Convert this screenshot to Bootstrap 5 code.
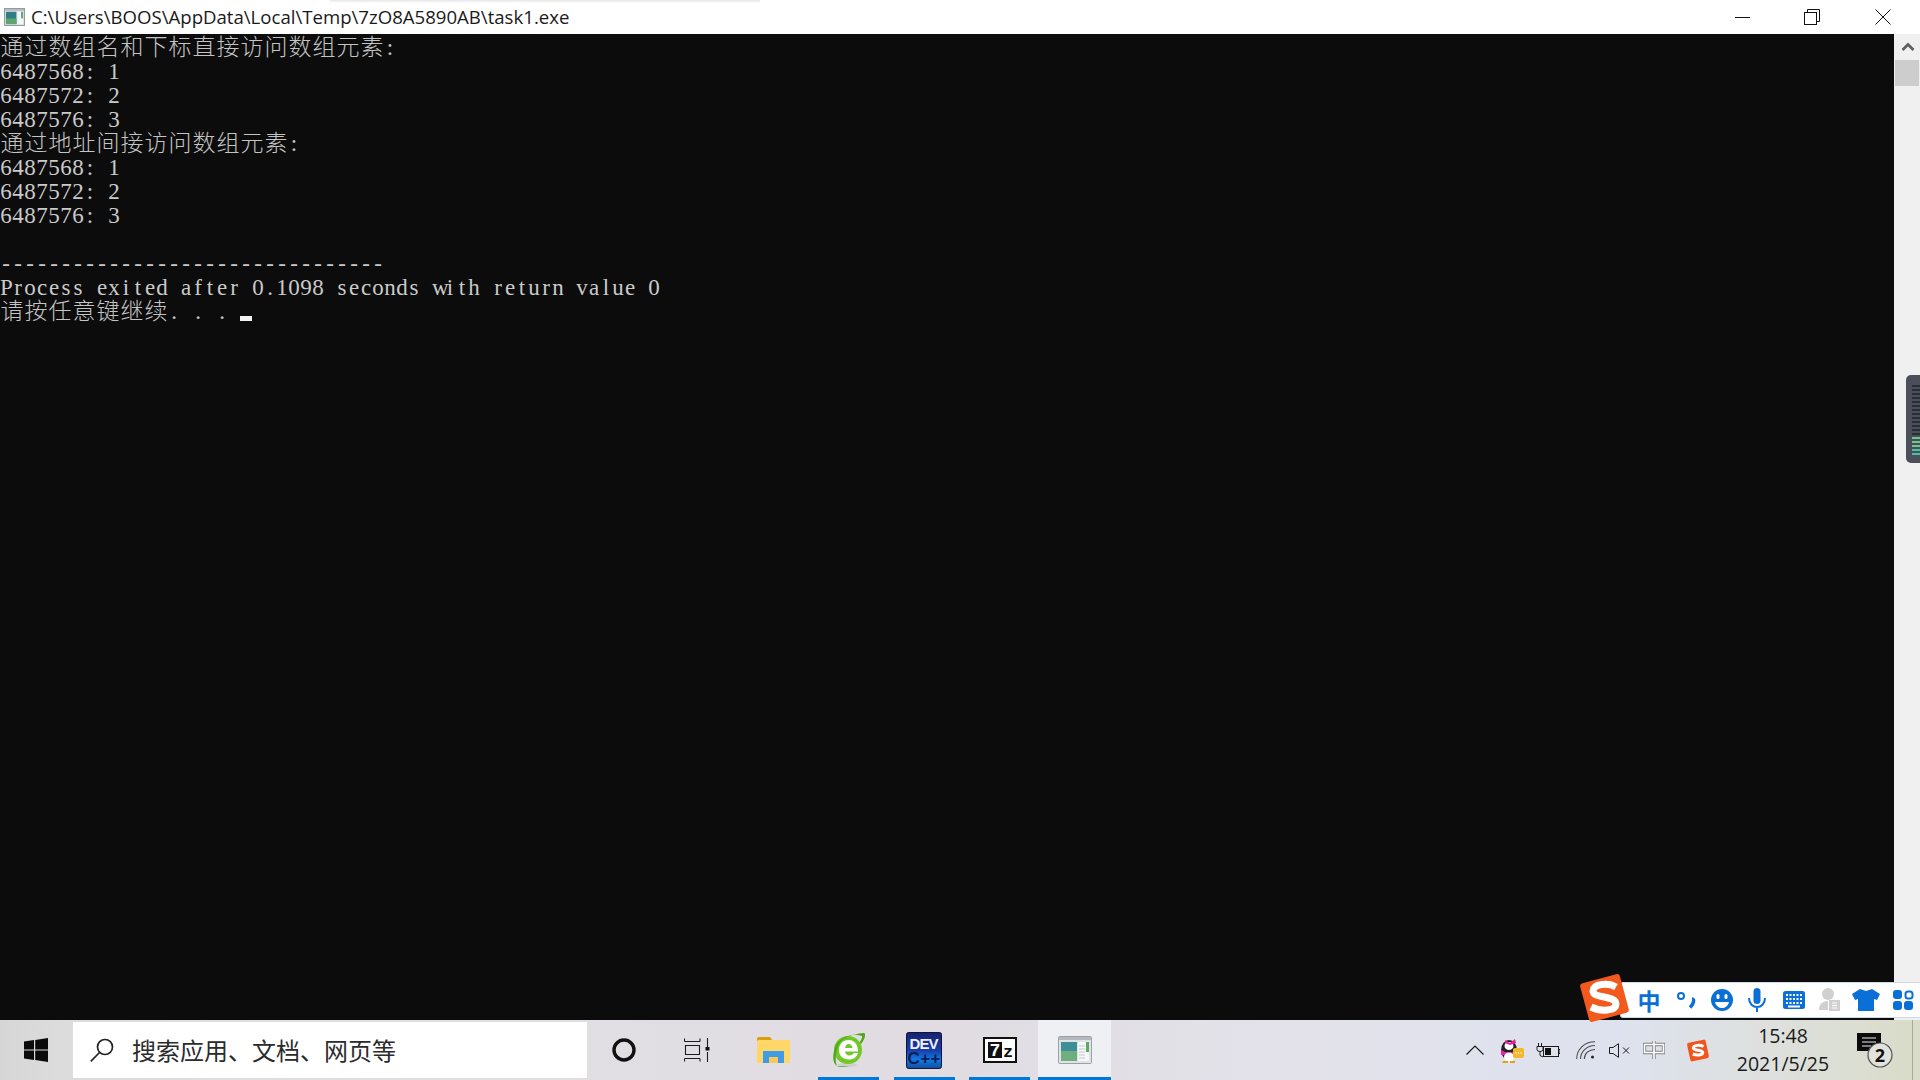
<!doctype html>
<html lang="zh-CN">
<head>
<meta charset="utf-8">
<title>task1.exe</title>
<link href="https://cdn.jsdelivr.net/npm/bootstrap@5.3.0/dist/css/bootstrap.min.css" rel="stylesheet">
<style>
html,body{height:100%;overflow:hidden}
body{background:#0c0c0c;font-family:"Open Sans","Noto Sans CJK SC",sans-serif}
.desk{width:1920px;height:1080px;position:relative}
.titlebar{height:34px;background:#fff;color:#1a1a1a;font-size:18.6px;line-height:34px;position:relative}
.titlebar .ttl{margin-left:6px;white-space:nowrap}
.topshade{position:absolute;left:330px;top:0;width:430px;height:3px;background:linear-gradient(#e6e6e6,#fff)}
.winbtns{margin-left:auto;padding-right:29px}
.winbtns svg{display:block;flex:none}
.winbtns .wb2{margin-left:54px}
.winbtns .wb3{margin-left:55px}
.midrow{height:986px}
.console{width:1894px;background:#0c0c0c;color:#cacaca;padding-top:2px;font-family:"Liberation Serif","Noto Sans CJK SC",serif}
.cline{height:24px;line-height:24px;white-space:pre;font-size:23px;display:block}
.cline .ch{display:inline-block;width:12px;text-align:center;vertical-align:top;white-space:pre}
.cline .hz{display:inline-block;width:24px;height:24px;text-align:center;vertical-align:top;font:300 23px/18px "Noto Sans CJK SC",sans-serif;color:#c4c4c4}
.caret{display:inline-block;width:12px;height:5px;background:#f2f2f2;vertical-align:-2px}
.sbar{width:26px;background:#f0f0f0;padding-left:1px}
.sbar .arrow{height:26px}
.sbar .thumb{width:24px;height:26px;background:#cdcdcd}
.taskbar{height:60px;background:linear-gradient(90deg,#d6d6d6 0,#dcdcdc 60px,#e2dfe4 500px,#e0dce2 950px,#e3e2ea 1300px,#dde2ee 1620px,#dde0dc 1780px,#d9dcc8 1920px);color:#111}
.startcell{width:73px}
.searchbox{width:514px;height:56px;margin-top:2px;background:#fff;padding-left:17px;gap:18px;font:24px/1 "Noto Sans CJK SC",sans-serif;color:#2b2b2b}
.tcell{height:60px;flex:none;position:relative}
.tcell.w-cort{width:97px;padding-left:25px}
.tcell.w-view{width:73px}
.tcell.w-exp{width:61px}
.tcell.run{width:61px;margin-right:14.500px}
.tcell.run::after,.tcell.active::after{content:"";position:absolute;left:0;right:0;bottom:0;height:3px;background:#0078d7}
.tcell.w-seven{margin-right:8px}
.tcell.active{width:73px;background:#eff0f4}
.tray{margin-left:auto;padding-right:7px;height:60px}
.tray .tslot{flex:none}
.gap-bat{margin-left:12px}.gap-wifi{margin-left:16px}.gap-spk{margin-left:14px}.gap-ime{margin-left:13px}.gap-sg{margin-left:21px}.gap-clock{margin-left:10px}.gap-note{margin-left:11px}
.clock{width:126px;font-size:19.500px;line-height:28px;text-align:center;color:#1a1a1a}
.showdesk{width:1px;height:60px;background:#a9a9a0;margin-left:19px}
.imebar{position:absolute;left:1620px;top:982px;width:300px;height:36px;background:#fff;border:1px solid #c9d9ee;border-right:0;border-radius:3px 0 0 3px}
.imebar .imeitem{position:absolute;top:0;height:34px;width:34px;margin-left:-17px}
.imezh{font:700 23px/34px "Noto Sans CJK SC",sans-serif;color:#0a6fd6;text-align:center}
.imelogo{position:absolute;left:1580px;top:973px}
.sidewidget{position:absolute;left:1906px;top:375px;width:14px;height:88px;background:#4c4f5a;border-radius:5px 0 0 5px;padding:10px 0 0 6px}
.sidewidget i{display:block;height:2px;width:8px;margin-bottom:2px;background:#2c2e36}
.sidewidget i.g{background:#6cc98c}
.sidewidget i.gt{background:#45c2a8}
</style>
</head>
<body>
<div class="desk d-flex flex-column">
  <div class="titlebar d-flex align-items-center">
    <svg class="ms-1" width="21" height="18" viewBox="0 0 22 19"><rect x=".5" y=".5" width="21" height="18" fill="#dfe3e6" stroke="#8d9499"/><rect x="1" y="1" width="20" height="2" fill="#b6bcc1"/><rect x="2" y="4" width="11" height="13" fill="#2f7d86"/><rect x="2" y="11" width="11" height="6" fill="#5ea46f"/><rect x="14" y="4" width="6" height="13" fill="#f4f6f7"/><rect x="18" y="4" width="2" height="7" fill="#59a86a"/></svg>
    <span class="ttl">C:\Users\BOOS\AppData\Local\Temp\7zO8A5890AB\task1.exe</span>
    <span class="topshade"></span>
    <div class="winbtns d-flex align-items-center">
      <svg width="15" height="15" viewBox="0 0 15 15"><path d="M0 7.500h15" stroke="#111" fill="none"/></svg>
      <svg class="wb2" width="16" height="16" viewBox="0 0 16 16"><path d="M3.500 3.500V.5h12v12h-3" fill="none" stroke="#111"/><rect x=".5" y="3.500" width="12" height="12" fill="#fff" stroke="#111"/></svg>
      <svg class="wb3" width="16" height="16" viewBox="0 0 16 16"><path d="M.5.5l15 15M15.500.5l-15 15" stroke="#111" fill="none"/></svg>
    </div>
  </div>
  <div class="midrow d-flex">
    <div class="console flex-grow-0">
      <div class="cline">通过数组名和下标直接访问数组元素:</div>
      <div class="cline">6487568: 1</div>
      <div class="cline">6487572: 2</div>
      <div class="cline">6487576: 3</div>
      <div class="cline">通过地址间接访问数组元素:</div>
      <div class="cline">6487568: 1</div>
      <div class="cline">6487572: 2</div>
      <div class="cline">6487576: 3</div>
      <div class="cline"></div>
      <div class="cline">--------------------------------</div>
      <div class="cline">Process exited after 0.1098 seconds with return value 0</div>
      <div class="cline" id="lastline">请按任意键继续. . . </div>
    </div>
    <div class="sbar">
      <div class="arrow d-flex align-items-center justify-content-center"><svg width="14" height="10" viewBox="0 0 14 10"><path d="M1.500 8L7 2.500 12.500 8" fill="none" stroke="#606060" stroke-width="2.800"/></svg></div>
      <div class="thumb"></div>
    </div>
  </div>
  <div class="taskbar d-flex">
    <div class="startcell d-flex align-items-center ps-4">
      <svg width="24" height="24" viewBox="0 0 24 24"><path d="M0 3.500l10-1.400v9.300H0zM11.200 1.900L24 0v11.400H11.200zM0 12.600h10v9.300L0 20.500zM11.200 12.600H24V24l-12.800-1.900z" fill="#0b0b0b"/></svg>
    </div>
    <div class="searchbox d-flex align-items-center">
      <svg width="24" height="24" viewBox="0 0 24 24"><circle cx="15" cy="9" r="7.500" fill="none" stroke="#222" stroke-width="1.700"/><path d="M9.500 14.500L.8 23.300" stroke="#222" stroke-width="1.700"/></svg>
      <span>搜索应用、文档、网页等</span>
    </div>
    <div class="tcell w-cort d-flex align-items-center"><svg width="24" height="24" viewBox="0 0 24 24"><circle cx="12" cy="12" r="10" fill="none" stroke="#111" stroke-width="3.400"/></svg></div>
    <div class="tcell w-view d-flex align-items-center"><svg width="26" height="24" viewBox="0 0 26 24"><path d="M.5 3.500V.5M.5 3.500h15.500M16 3.500V.5M1.500 7.500h14v9h-14zM.5 20.500h15.500M.5 20.500v3M16 20.500v3M23.500 0v9M23.500 14v10" fill="none" stroke="#1c1c1c" stroke-width="1.100"/><rect x="21.500" y="9" width="4" height="3.500" fill="#111"/></svg></div>
    <div class="tcell w-exp d-flex align-items-center"><svg width="33" height="26" viewBox="0 0 33 26"><path d="M0 2q0-2 2-2h11l3 4H0z" fill="#dc9e10"/><rect y="3" width="33" height="23" rx="1.500" fill="#ffd768"/><path d="M6 26V14h21v12h-6v-6h-9v6z" fill="#3f9be6"/><rect x="12" y="20" width="9" height="6" fill="#f6c95a"/></svg></div>
    <div class="tcell run d-flex align-items-center justify-content-center"><svg width="34" height="36" viewBox="0 0 34 36"><ellipse cx="15" cy="33" rx="10" ry="2" fill="#cfcfcf"/><circle cx="16" cy="18" r="14" fill="#72c828"/><path d="M7 18c0-6 4-10 9.500-10S26 12 26 19.500H13c.5 2.500 2 4 4.500 4 2 0 3.500-1 4.300-2.500H26c-1.500 4.500-4.700 6.500-8.800 6.500C11 27.500 7 24 7 18zm6-2h7.500c-.4-2.500-2-4-3.800-4S13.500 13.500 13 16z" fill="#fff"/><path d="M5 34C0 31 .5 22 3.500 14 7 7 15 3 26 2c-9 1-17 5-20 12-2.500 7-3 15-1 20z" fill="#4fa81c"/><path d="M22 3c5-2 11-3 11-1 .5 3-1.500 7-4 10l-1.500-1.500c1.500-2 3-5 2.500-6.500-1-.5-4-1-8-1z" fill="#4fa81c"/><path d="M5 34c3 1 8 1.500 12 .5-5 0-9-.5-12-.5z" fill="#4fa81c"/></svg></div>
    <div class="tcell run d-flex align-items-center justify-content-center"><svg width="36" height="37" viewBox="0 0 36 37"><defs><linearGradient id="dv" x1="0" y1="0" x2="0" y2="1"><stop offset="0" stop-color="#16236e"/><stop offset=".5" stop-color="#1a3ea8"/><stop offset=".75" stop-color="#0f7be6"/><stop offset="1" stop-color="#124d9e"/></linearGradient></defs><rect x=".5" y=".5" width="35" height="36" rx="2" fill="url(#dv)" stroke="#10163a"/><text x="18" y="17" font-family="Liberation Sans" font-weight="700" font-size="15" text-anchor="middle" fill="#eef1fa" textLength="29">DEV</text><text x="18" y="32" font-family="Liberation Sans" font-weight="700" font-size="17" text-anchor="middle" fill="#0b1c55" textLength="33">C++</text></svg></div>
    <div class="tcell run w-seven d-flex align-items-center justify-content-center"><svg width="34" height="26" viewBox="0 0 34 26"><rect x="1" y="1" width="32" height="24" fill="#fff" stroke="#111" stroke-width="2"/><rect x="5" y="5" width="14" height="16" fill="#111"/><text x="12" y="19" font-family="Liberation Mono" font-weight="700" font-size="18" text-anchor="middle" fill="#fff">7</text><text x="25" y="20" font-family="Liberation Mono" font-weight="700" font-size="17" text-anchor="middle" fill="#111">z</text></svg></div>
    <div class="tcell active d-flex align-items-center justify-content-center"><svg width="34" height="28" viewBox="0 0 34 28"><rect x=".5" y=".5" width="33" height="27" rx="1" fill="#dfe3e6" stroke="#9ba1a6"/><rect x="1" y="1" width="32" height="3" fill="#b3b9be"/><rect x="3" y="6" width="16" height="19" fill="#3d8e96"/><rect x="3" y="15" width="16" height="10" fill="#6fae7d"/><rect x="20" y="6" width="11" height="19" fill="#f6f7f8"/><rect x="28" y="6" width="3" height="10" fill="#5aa96a"/><path d="M21 10h6M21 13h6M21 16h6M21 19h6M21 22h6" stroke="#c6cacc"/></svg></div>

    <div class="tray d-flex align-items-center">
      <svg class="tslot" width="18" height="10" viewBox="0 0 18 10"><path d="M.5 9.500L9 1l8.500 8.500" fill="none" stroke="#1a1a1a" stroke-width="1.200"/></svg>
      <svg class="tslot ms-3" width="24" height="25" viewBox="0 0 24 25"><ellipse cx="9" cy="12" rx="8" ry="10" fill="#222"/><ellipse cx="9" cy="8" rx="4.500" ry="4" fill="#fff"/><path d="M1 12q8 5 16 0l1 5H1z" fill="#f020b0"/><path d="M5 2l5 3 5-4 1 4-6 2-5-2z" fill="#ee1f9e"/><ellipse cx="9" cy="19" rx="5" ry="4.500" fill="#fff"/><path d="M3 23h5v2H2zM10 23h5v2h-5z" fill="#e8a010"/><rect x="13" y="10" width="11" height="10" rx="2" fill="#f3b92a"/><path d="M15.500 15h1M18 15h1M20.500 15h1" stroke="#fff" stroke-width="1.500"/></svg>
      <svg class="tslot gap-bat" width="24" height="15" viewBox="0 0 24 15"><rect x="7.500" y="3.500" width="15" height="10" fill="none" stroke="#1c1c1c"/><rect x="9" y="5" width="6" height="7" fill="#111"/><path d="M23 6.500h1v4h-1M2.500 0v3M5.500 0v3M1 3.500h6v3q0 2-3 2t-3-2zM4 8.500v4l3 1.500" fill="none" stroke="#1c1c1c"/></svg>
      <svg class="tslot gap-wifi" width="19" height="18" viewBox="0 0 19 18"><path d="M.7 18C.7 8.500 8 .7 19 .7M4.500 18C4.500 11 10.500 4.500 19 4.500M8.300 18c0-5.500 4.500-9.500 10.700-9.500" fill="none" stroke="#4b4b4b" stroke-width="1.100"/><circle cx="16.500" cy="16" r="1.500" fill="#222"/></svg>
      <svg class="tslot gap-spk" width="21" height="15" viewBox="0 0 21 15"><path d="M.5 4.500h3.500L9.500.7v13.600L4 10.500H.5z" fill="none" stroke="#1c1c1c"/><path d="M14 4.500l6 6M20 4.500l-6 6" stroke="#1c1c1c"/></svg>
      <svg class="tslot gap-ime" width="22" height="20" viewBox="0 0 22 20"><path d="M1.500 4.500h19v8h-19zM11 1v18" fill="none" stroke="#808080" stroke-width="3.400"/><path d="M1.500 4.500h19v8h-19zM11 1v18" fill="none" stroke="#fff" stroke-width="1.600"/></svg>
      <svg class="tslot gap-sg" width="24" height="23" viewBox="0 0 24 23"><rect x="2.500" y="2" width="19" height="19" rx="2" fill="#f0551c" transform="rotate(-12 12 11.500)"/><path d="M17.500 7.500C14 5.500 7.500 6 7.300 9c0 3 9.500 1.500 9.500 4.500 0 3-6.500 3-10 1.500" fill="none" stroke="#fff" stroke-width="3"/></svg>
      <div class="clock tslot gap-clock"><div>15:48</div><div>2021/5/25</div></div>
      <svg class="tslot gap-note" width="36" height="36" viewBox="0 0 36 36"><path d="M0 1h24v18h-8l-4 4v-4H0z" fill="#0b0b0b"/><path d="M5 6h14M5 10h14M5 14h9" stroke="#eee"/><circle cx="23" cy="23" r="12" fill="#e2e2dc" stroke="#555" stroke-width="1.200"/><text x="23" y="29.500" text-anchor="middle" font-family="Open Sans" font-weight="700" font-size="18" fill="#111">2</text></svg>
      <div class="showdesk tslot"></div>
    </div>
  </div>

  <div class="imebar">
    <div class="imeitem imezh" style="left:28px">中</div>
    <svg class="imeitem" style="left:65px" viewBox="0 0 34 34"><circle cx="12" cy="13" r="3" fill="none" stroke="#0a6fd6" stroke-width="2"/><path d="M23 16c1.500 0 2 1 1.500 3-.5 2-2 4-3.500 5.500" fill="none" stroke="#0a6fd6" stroke-width="3.400"/></svg>
    <svg class="imeitem" style="left:101px" viewBox="0 0 34 34"><circle cx="17" cy="17" r="11" fill="#0a6fd6"/><rect x="11.500" y="11" width="3" height="5" rx="1.500" fill="#fff"/><rect x="19.500" y="11" width="3" height="5" rx="1.500" fill="#fff"/><path d="M10 19h14c-1 4-4 6-7 6s-6-2-7-6z" fill="#fff"/></svg>
    <svg class="imeitem" style="left:136px" viewBox="0 0 34 34"><rect x="13.500" y="5" width="7" height="16" rx="3.500" fill="#0a6fd6"/><path d="M9 15c0 6 4 9 8 9s8-3 8-9M17 24v5" fill="none" stroke="#0a6fd6" stroke-width="2"/></svg>
    <svg class="imeitem" style="left:173px" viewBox="0 0 34 34"><rect x="6" y="8" width="22" height="18" rx="2.500" fill="#0a6fd6"/><path d="M9 12h16M9 16h16M9 20h16" stroke="#fff" stroke-width="2" stroke-dasharray="2 1.500"/><path d="M11 23.500h12" stroke="#fff" stroke-width="2"/></svg>
    <svg class="imeitem" style="left:209px" viewBox="0 0 34 34"><circle cx="15" cy="11" r="6" fill="#d0d0d0"/><path d="M6 27c0-6 4-9 9-9v9z" fill="#d0d0d0"/><rect x="16" y="17" width="11" height="11" fill="#d0d0d0"/><path d="M19 20h5M19 22.500h5M19 25h5" stroke="#fff"/></svg>
    <svg class="imeitem" style="left:245px" viewBox="0 0 34 34"><path d="M11 6l6 2 6-2 8 5-3 6-3-1v12H9V16l-3 1-3-6z" fill="#0a6fd6"/></svg>
    <svg class="imeitem" style="left:282px" viewBox="0 0 34 34"><rect x="7" y="7" width="9" height="9" rx="3" fill="#0a6fd6"/><rect x="19.500" y="8.500" width="7" height="7" rx="2.500" fill="none" stroke="#0a6fd6" stroke-width="2"/><rect x="7" y="18" width="9" height="9" rx="3" fill="#0a6fd6"/><rect x="18" y="18" width="9" height="9" rx="3" fill="#0a6fd6"/></svg>
  </div>
  <svg class="imelogo" width="50" height="50" viewBox="0 0 50 50"><rect x="4" y="5" width="41" height="40" rx="3" fill="#f2591c" transform="rotate(-15 24.500 25)"/><path d="M36 14C28 9 13 11 13 18c0 8 23 4 23 13 0 7-15 8-25 3" fill="none" stroke="#fff" stroke-width="7"/></svg>
  <div class="sidewidget"><i></i><i></i><i></i><i></i><i></i><i></i><i></i><i></i><i></i><i></i><i></i><i></i><i></i><i class="g"></i><i class="g"></i><i class="g"></i><i class="gt"></i><i class="gt"></i></div>
</div>
<script>
document.querySelectorAll('.cline').forEach(function(l){
  var t=l.textContent;l.textContent='';
  Array.from(t).forEach(function(c){
    var s=document.createElement('span');
    s.className=c.charCodeAt(0)>255?'hz':'ch';
    s.textContent=c;l.appendChild(s);
  });
});
var c=document.createElement('span');c.className='caret';document.getElementById('lastline').appendChild(c);
</script>
</body>
</html>
